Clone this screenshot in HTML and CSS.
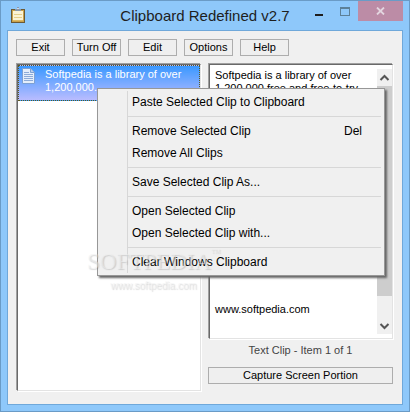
FILE: index.html
```html
<!DOCTYPE html>
<html lang="en">

<head>
    <meta charset="UTF-8">
    <meta name="viewport" content="width=device-width, initial-scale=1.0">
    <title>Clipboard Redefined v2.7</title>
    <link rel="stylesheet" href="styles.css">
</head>

<body>
    <div class="window">
        <header class="titleBar">
            <svg class="appIcon" width="14" height="16" viewBox="0 0 14 16" aria-hidden="true">
                <rect x="0.5" y="2.5" width="13" height="13" fill="#c9a24c" stroke="#6b5a35" />
                <rect x="2" y="4" width="10" height="10" fill="#fbf3d5" />
                <path d="M3 7.5h8M3 10.5h8" stroke="#e5cf8c" />
                <path d="M2 13.5h10" stroke="#dcb965" />
                <path d="M4 4V2h2V0h2v2h2v2z" fill="#8a98aa" />
                <path d="M6 1h2v1H6z" fill="#cfd9e6" />
            </svg>
            <h1>Clipboard Redefined v2.7</h1>
            <div class="windowButtons">
                <button type="button" class="minimize" aria-label="Minimize">
                    <svg width="10" height="10" viewBox="0 0 10 10"><path d="M1 7h8v2H1z" fill="#1e1e1e" /></svg>
                </button>
                <button type="button" class="maximize" aria-label="Maximize">
                    <svg width="10" height="9" viewBox="0 0 10 9"><path d="M0 1h10M0.5 0v9M9.5 0v9M0 8.5h10" fill="none" stroke="#5c8098" /><path d="M0 0h10v2H0z" fill="#5c8098" /></svg>
                </button>
                <button type="button" class="close" aria-label="Close">
                    <svg width="9" height="8" viewBox="0 0 9 8"><path d="M1 0.5l7 7M8 0.5l-7 7" stroke="#e3d5df" stroke-width="1.8" /></svg>
                </button>
            </div>
        </header>

        <main class="client">
            <div class="toolbar">
                <button type="button">Exit</button>
                <button type="button">Turn Off</button>
                <button type="button">Edit</button>
                <button type="button">Options</button>
                <button type="button">Help</button>
            </div>

            <div class="panels">
                <div class="clipList sunken">
                    <div class="clip">
                        <svg width="14" height="16" viewBox="0 0 14 16" aria-hidden="true">
                            <path d="M0.5 0.5h8l4 4v11h-12z" fill="#e4eefb" stroke="#7da0d2" />
                            <path d="M8.5 0.5v4h4" fill="#b9cfee" stroke="#7da0d2" />
                            <path d="M2 4.5h5M2 6.5h9M2 8.5h9M2 10.5h9M2 12.5h9" stroke="#8dabd8" />
                        </svg>
                        <p>Softpedia is a library of over 1,200,000...</p>
                    </div>
                </div>

                <div class="preview">
                    <div class="clipBox sunken">
                        <textarea aria-label="Clip text">Softpedia is a library of over
1,200,000 free and free-to-try
















www.softpedia.com</textarea>
                        <div class="scrollbar">
                            <svg width="15" height="17" viewBox="0 0 15 17"><path d="M3.5 11l4-4 4 4" fill="none" stroke="#555" stroke-width="2" /></svg>
                            <div class="thumb"></div>
                            <svg width="15" height="17" viewBox="0 0 15 17"><path d="M3.5 7l4 4 4-4" fill="none" stroke="#555" stroke-width="2" /></svg>
                        </div>
                    </div>
                    <p class="status">Text Clip - Item 1 of 1</p>
                    <button type="button">Capture Screen Portion</button>
                </div>
            </div>
        </main>

        <div class="contextMenu" role="menu">
            <button type="button" role="menuitem">Paste Selected Clip to Clipboard</button>
            <hr>
            <button type="button" role="menuitem">Remove Selected Clip <span>Del</span></button>
            <button type="button" role="menuitem">Remove All Clips</button>
            <hr>
            <button type="button" role="menuitem">Save Selected Clip As...</button>
            <hr>
            <button type="button" role="menuitem">Open Selected Clip</button>
            <button type="button" role="menuitem">Open Selected Clip with...</button>
            <hr>
            <button type="button" role="menuitem">Clear Windows Clipboard</button>
        </div>

        <div class="watermark">
            <div class="brand">SOFTPEDIA<sup>TM</sup></div>
            <div class="site">www.softpedia.com</div>
        </div>
    </div>
</body>

</html>
```
FILE: styles.css
```css
* {
    box-sizing: border-box;
}

body {
    margin: 0;
    font-family: "Liberation Sans", Arial, sans-serif;
    font-size: 11px;
    line-height: 13px;
    color: #000;
}

h1,
p {
    margin: 0;
    font-weight: normal;
}

button {
    font: inherit;
    color: inherit;
}

svg {
    display: block;
    flex: none;
}

.window {
    position: relative;
    display: flex;
    flex-direction: column;
    min-height: 100vh;
    padding: 0 6px 6px;
    border: 1px solid #6a9bc6;
    background: #8ec8fa;
}

/* title bar */
.titleBar {
    position: relative;
    display: flex;
    align-items: center;
    justify-content: center;
    height: 29px;
}

.titleBar h1 {
    font-size: 15px;
    line-height: 20px;
    color: #1e1e1e;
}

.appIcon {
    position: absolute;
    left: 4px;
    top: 6px;
}

.windowButtons {
    position: absolute;
    top: 0;
    right: 0;
    display: flex;
}

.windowButtons button {
    display: flex;
    align-items: center;
    justify-content: center;
    width: 26px;
    height: 20px;
    padding: 0;
    border: 0;
    background: none;
}

.windowButtons .minimize {
    align-items: flex-end;
    padding-bottom: 4px;
}

.windowButtons .close {
    width: 45px;
    background: #bc8ca6;
}

/* client area */
.client {
    flex: 1;
    display: flex;
    flex-direction: column;
    gap: 7px;
    padding: 8px 9px 13px 8px;
    border: 1px solid #6fa8da;
    background: #f0f0f0;
}

.toolbar {
    display: flex;
    gap: 7px;
}

.toolbar button,
.preview button {
    height: 17px;
    padding: 0;
    border: 1px solid #adadad;
    background: #efefef;
    line-height: 15px;
}

.toolbar button {
    width: 49px;
}

.panels {
    flex: 1;
    display: grid;
    grid-template-columns: 1fr 1fr;
    gap: 7px;
}

.sunken {
    margin: 1px 0 0 1px;
    border: 1px solid;
    border-color: #696969 #e3e3e3 #e3e3e3 #696969;
    background: #fff;
    box-shadow: -1px -1px #a0a0a0, 1px 1px #fff;
}

.clip {
    display: flex;
    gap: 9px;
    height: 36px;
    padding: 2px 3px;
    border: 1px dotted #5c5a20;
    background: linear-gradient(#3a98ff, #b9bcff);
    color: #fff;
}

.preview {
    display: flex;
    flex-direction: column;
    padding-bottom: 7px;
}

.clipBox {
    flex: 1;
    display: flex;
    padding: 4px 0;
}

.clipBox textarea {
    flex: 1;
    min-width: 0;
    padding: 0 0 0 5px;
    border: 0;
    outline: 0;
    resize: none;
    overflow: hidden;
    font: inherit;
    color: #000;
    background: none;
}

.scrollbar {
    display: flex;
    flex-direction: column;
    background: #f0f0f0;
}

.scrollbar .thumb {
    flex: 1;
    margin-bottom: 21px;
    background: #cdcdcd;
}

.status {
    padding: 5px 0 10px;
    text-align: center;
    color: #444;
}

/* menu that opens on the selected clip */
.contextMenu {
    position: absolute;
    left: 96px;
    top: 87px;
    width: 288px;
    padding: 2px 3px 2px 2px;
    border: 1px solid #979797;
    background: #f0f0f0;
    box-shadow: 2px 2px 2px #666;
}

/* icon gutter line */
.contextMenu::before {
    content: "";
    position: absolute;
    left: 29px;
    top: 2px;
    bottom: 2px;
    border-left: 1px solid #d7d7d7;
}

.contextMenu button {
    display: flex;
    justify-content: space-between;
    width: 100%;
    height: 22px;
    padding: 0 19px 0 32px;
    border: 0;
    background: none;
    font-size: 12px;
    line-height: 22px;
    text-align: left;
}

.contextMenu hr {
    height: 1px;
    margin: 3px 0 3px 28px;
    border: 0;
    background: #d7d7d7;
}

.watermark {
    position: absolute;
    left: 86px;
    top: 247px;
    pointer-events: none;
    color: rgba(240, 240, 240, .5);
    text-shadow: 1px 1px 1px rgba(130, 130, 130, .3);
    text-align: center;
}

.watermark .brand {
    font-family: "Liberation Serif", serif;
    font-size: 23px;
    line-height: 28px;
}

.watermark sup {
    font-size: 6px;
    line-height: 6px;
    vertical-align: top;
}

.watermark .site {
    font-size: 10px;
    line-height: 20px;
}
```
